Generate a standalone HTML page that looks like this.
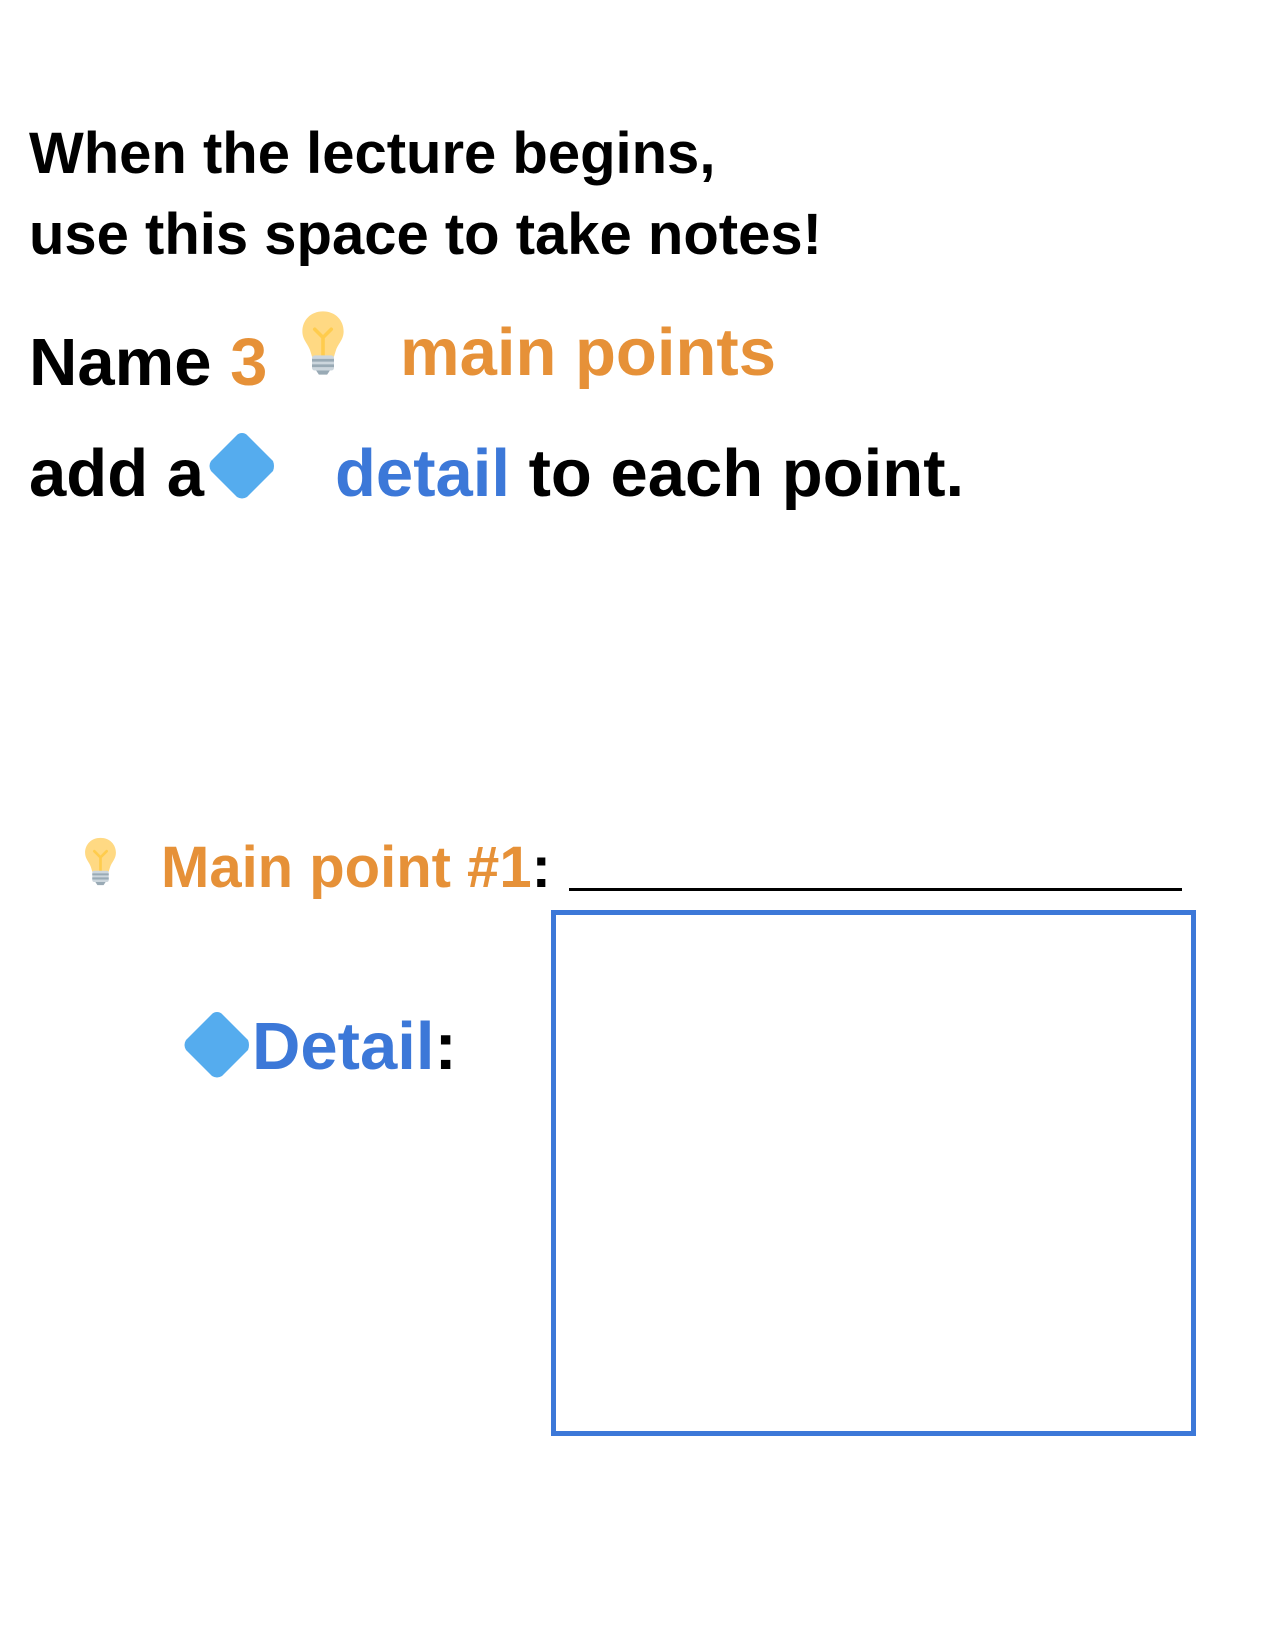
<!DOCTYPE html>
<html><head><meta charset="utf-8"><style>
html,body{margin:0;padding:0;background:#fff;width:1275px;height:1650px;overflow:hidden;position:relative}
.t{position:absolute;font-family:"Liberation Sans",Arial,sans-serif;font-weight:bold;line-height:1;white-space:nowrap;color:#000}
.o{color:#e69138}.b{color:#3c78d8}
svg{position:absolute}
</style></head><body>
<div class="t" style="left:29px;top:125px;font-size:58px">When the lecture begins,</div>
<div class="t" style="left:29px;top:206px;font-size:58px">use this space to take notes!</div>
<div class="t" style="left:29px;top:329px;font-size:67px">Name <span class="o">3</span></div>
<div class="t o" style="left:400px;top:319px;font-size:67px">main points</div>
<div class="t" style="left:29px;top:440px;font-size:67px">add a</div>
<div class="t" style="left:335px;top:440px;font-size:67px"><span class="b">detail</span> to each point.</div>
<div class="t" style="left:161px;top:839px;font-size:58px"><span class="o">Main point #1</span>:</div>
<div style="position:absolute;left:569px;top:888px;width:613px;height:3px;background:#000"></div>
<div class="t" style="left:252px;top:1013px;font-size:67px"><span class="b">Detail</span>:</div>
<div style="position:absolute;left:551px;top:910px;width:635px;height:516px;border:5px solid #3c78d8"></div>

<svg style="left:298px;top:310px" width="50" height="66" viewBox="0 0 36 48">
<path d="M18 1C9 1 3 7.5 3 15.5c0 6 4 9 5.5 13.5 1 3 1.5 5 1.5 5h16s.5-2 1.5-5C29 24.5 33 21.5 33 15.5 33 7.5 27 1 18 1z" fill="#ffd983"/>
<path d="M18 34V20M12 14l6 6 6-6" stroke="#ffcc4d" stroke-width="2.6" fill="none" stroke-linecap="round"/>
<rect x="10" y="33" width="16" height="11" rx="2" fill="#ccd6dd"/>
<path d="M10 36.5h16M10 40.5h16" stroke="#99aab5" stroke-width="2"/>
<path d="M13 44h10l-2 3h-6z" fill="#99aab5"/>
</svg>
<svg style="left:82px;top:836px" width="37" height="51" viewBox="0 0 36 48">
<path d="M18 1C9 1 3 7.5 3 15.5c0 6 4 9 5.5 13.5 1 3 1.5 5 1.5 5h16s.5-2 1.5-5C29 24.5 33 21.5 33 15.5 33 7.5 27 1 18 1z" fill="#ffd983"/>
<path d="M18 34V20M12 14l6 6 6-6" stroke="#ffcc4d" stroke-width="2.6" fill="none" stroke-linecap="round"/>
<rect x="10" y="33" width="16" height="11" rx="2" fill="#ccd6dd"/>
<path d="M10 36.5h16M10 40.5h16" stroke="#99aab5" stroke-width="2"/>
<path d="M13 44h10l-2 3h-6z" fill="#99aab5"/>
</svg>
<svg style="left:207px;top:431px" width="70" height="70" viewBox="0 0 70 70"><path d="M35 2Q38 2 40 4L66 30Q68 35 66 40L40 66Q35 69 30 66L4 40Q1 35 4 30L30 4Q32 2 35 2z" fill="#55acee"/></svg>
<svg style="left:182px;top:1010px" width="70" height="70" viewBox="0 0 70 70"><path d="M35 2Q38 2 40 4L66 30Q68 35 66 40L40 66Q35 69 30 66L4 40Q1 35 4 30L30 4Q32 2 35 2z" fill="#55acee"/></svg>
</body></html>
